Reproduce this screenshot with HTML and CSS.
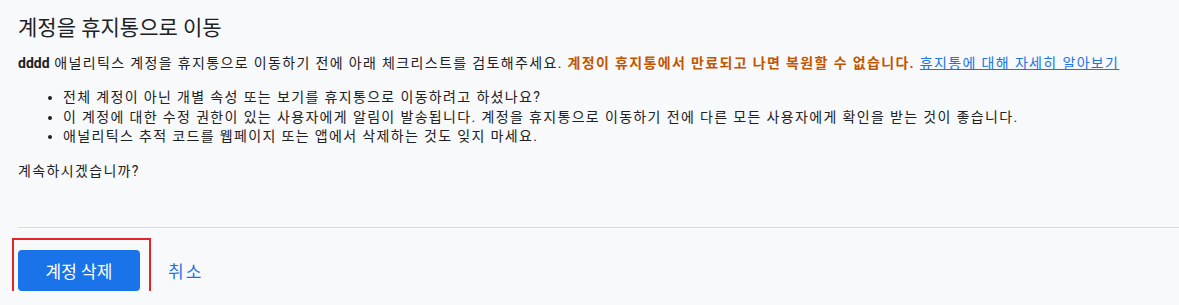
FILE: index.html
```html
<!DOCTYPE html>
<html lang="ko">
<head>
<meta charset="utf-8">
<link rel="stylesheet" href="styles.css">
</head>
<body>
<div class="dialog">
  <div class="content">
    <h1 class="title">계정을 휴지통으로 이동</h1>
    <p class="intro"><b>dddd</b> 애널리틱스 계정을 휴지통으로 이동하기 전에 아래 체크리스트를 검토해주세요. <span class="warn">계정이 휴지통에서 만료되고 나면 복원할 수 없습니다.</span> <a class="link" href="#">휴지통에 대해 자세히 알아보기</a></p>
    <ul class="checklist">
      <li>전체 계정이 아닌 개별 속성 또는 보기를 휴지통으로 이동하려고 하셨나요?</li>
      <li>이 계정에 대한 수정 권한이 있는 사용자에게 알림이 발송됩니다. 계정을 휴지통으로 이동하기 전에 다른 모든 사용자에게 확인을 받는 것이 좋습니다.</li>
      <li>애널리틱스 추적 코드를 웹페이지 또는 앱에서 삭제하는 것도 잊지 마세요.</li>
    </ul>
    <p class="question">계속하시겠습니까?</p>
  </div>
  <div class="footer">
    <button class="btn-primary">계정 삭제</button>
    <button class="btn-text">취소</button>
    <div class="highlight"></div>
  </div>
</div>
</body>
</html>
```

FILE: styles.css
```css
html, body {
  margin: 0;
  padding: 0;
  background: #f8f9fa;
}
body {
  font-family: Roboto, "Noto Sans CJK KR", sans-serif;
  color: #202124;
  font-size: 14px;
}
.dialog {
  padding-left: 18px;
}
.content {
  padding-top: 14px;
  height: 228px;
  box-sizing: border-box;
  border-bottom: 1px solid #dadce0;
}
.title {
  margin: 0;
  font-size: 21px;
  font-weight: 400;
  line-height: 28px;
}
.intro {
  margin: 11px 0 0;
  line-height: 20px;
  letter-spacing: 1.35px;
}
.intro b {
  font-weight: 700;
  letter-spacing: 0;
}
.warn {
  color: #c45500;
  font-weight: 700;
}
.link {
  color: #1a73e8;
  text-decoration: underline;
}
.checklist {
  margin: 15px 0 0;
  padding-left: 45px;
  line-height: 19.5px;
  letter-spacing: 1.35px;
}
.question {
  margin: 14px 0 0;
  line-height: 20px;
  letter-spacing: 1.35px;
}
.footer {
  position: relative;
  display: flex;
  align-items: center;
  gap: 28px;
  padding-top: 22px;
}
.btn-primary {
  height: 41px;
  width: 122px;
  border: none;
  border-radius: 4px;
  background: #1a73e8;
  color: #fff;
  font-family: Roboto, "Noto Sans CJK KR", sans-serif;
  font-size: 17px;
  padding: 0;
}
.btn-text {
  border: none;
  background: none;
  padding: 0;
  color: #1a73e8;
  font-family: Roboto, "Noto Sans CJK KR", sans-serif;
  font-size: 17px;
  letter-spacing: 2px;
}
.highlight {
  position: absolute;
  left: -6px;
  top: 10px;
  width: 135px;
  height: 56px;
  border: 2px solid #e5232b;
  pointer-events: none;
}
```
